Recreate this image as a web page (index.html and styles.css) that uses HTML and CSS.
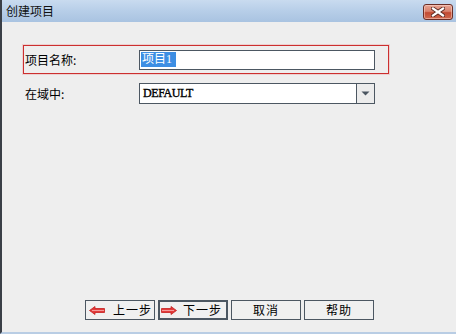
FILE: index.html
```html
<!DOCTYPE html>
<html lang="zh-CN">
<head>
<meta charset="utf-8">
<title>创建项目</title>
<link rel="stylesheet" href="styles.css">
</head>
<body>
<div class="window">
  <div class="titlebar">
    <span class="title">创建项目</span>
    <span class="close" aria-label="关闭">
      <svg width="14" height="10" viewBox="0 0 14 10">
        <path d="M2 1.5 L12 8.5 M12 1.5 L2 8.5" stroke="#5a2a22" stroke-width="4" stroke-linecap="square"/>
        <path d="M2 1.5 L12 8.5 M12 1.5 L2 8.5" stroke="#ffffff" stroke-width="2.2" stroke-linecap="square"/>
      </svg>
    </span>
  </div>
  <div class="content">
    <div class="form">
      <div class="row row-active">
        <span class="label">项目名称:</span>
        <div class="field"><span class="selected">项目1</span></div>
      </div>
      <div class="row">
        <span class="label">在域中:</span>
        <div class="combo">
          <span class="combo-value">DEFAULT</span>
          <span class="combo-drop">
            <svg width="9" height="5" viewBox="0 0 9 5"><polygon points="0.5,0.5 8.5,0.5 4.5,4.5" fill="#4a5560"/></svg>
          </span>
        </div>
      </div>
    </div>
    <div class="buttons">
      <span class="btn btn-icon">
        <svg width="16" height="9" viewBox="0 0 16 9">
          <polygon points="0.5,4.5 6,0.5 6,2.5 15.5,2.5 15.5,6.5 6,6.5 6,8.5" fill="#e23b3b" stroke="#c42020" stroke-width="0.8"/>
          <line x1="3" y1="4.5" x2="15" y2="4.5" stroke="#f59a9a" stroke-width="1"/>
        </svg>
        <span>上一步</span>
      </span>
      <span class="btn btn-icon btn-default">
        <svg width="16" height="9" viewBox="0 0 16 9">
          <polygon points="15.5,4.5 10,0.5 10,2.5 0.5,2.5 0.5,6.5 10,6.5 10,8.5" fill="#e23b3b" stroke="#c42020" stroke-width="0.8"/>
          <line x1="1" y1="4.5" x2="13" y2="4.5" stroke="#f59a9a" stroke-width="1"/>
        </svg>
        <span>下一步</span>
      </span>
      <span class="btn">取消</span>
      <span class="btn">帮助</span>
    </div>
  </div>
</div>
</body>
</html>
```

FILE: styles.css
```css
html, body {
  margin: 0;
  padding: 0;
  background: #eeeeee;
}

.window {
  width: 456px;
  height: 334px;
  box-sizing: border-box;
  display: flex;
  flex-direction: column;
  background: #eeeeee;
  border-left: 2px solid #3a3f47;
  border-bottom: 2px solid #b9cde4;
  font-family: "Noto Sans CJK SC", "Liberation Sans", sans-serif;
  font-size: 12px;
  color: #000;
}

.titlebar {
  height: 22px;
  flex: none;
  display: flex;
  align-items: center;
  justify-content: space-between;
  padding: 0 3px 0 4px;
  background: linear-gradient(to bottom, #c9dbef 0%, #b7cee8 50%, #a9c3e1 100%);
}

.title {
  font-size: 12px;
  line-height: 16px;
  color: #111111;
}

.close {
  width: 30px;
  height: 16px;
  box-sizing: border-box;
  margin-top: 1px;
  border: 1px solid #6b2e26;
  border-radius: 3px;
  display: flex;
  align-items: center;
  justify-content: center;
  background: linear-gradient(to bottom, #e8a593 0%, #d9826e 45%, #c24a32 55%, #cf6a50 100%);
  box-shadow: inset 0 0 0 1px rgba(255, 220, 210, 0.5);
}

.close svg {
  display: block;
}

.content {
  flex: 1;
  display: flex;
  flex-direction: column;
  padding: 23px 0 12px 21px;
}

.form {
  display: flex;
  flex-direction: column;
  gap: 5px;
}

.row {
  width: 366px;
  height: 29px;
  box-sizing: border-box;
  border: 1px solid transparent;
  display: flex;
  align-items: center;
  padding-left: 1px;
}

.row-active {
  border-color: #cc2f2f;
  box-shadow: 0 0 0 1px rgba(236, 170, 170, 0.45);
}

.label {
  width: 114px;
  flex: none;
  line-height: 16px;
}

.field {
  width: 236px;
  height: 20px;
  box-sizing: border-box;
  border: 1px solid #4c5762;
  background: #ffffff;
  display: flex;
  align-items: center;
  padding-left: 1px;
}

.selected {
  background: #3d8ee3;
  color: #ffffff;
  font-family: "Liberation Serif", "Noto Sans CJK SC", serif;
  font-size: 12px;
  line-height: 15px;
  padding: 0 4px 0 1px;
}

.combo {
  width: 236px;
  height: 21px;
  box-sizing: border-box;
  border: 1px solid #4c5762;
  background: #ffffff;
  display: flex;
  align-items: stretch;
}

.combo-value {
  flex: 1;
  display: flex;
  align-items: center;
  padding-left: 3px;
  font-family: "Liberation Serif", serif;
  font-size: 12px;
  letter-spacing: -0.4px;
  color: #000000;
  -webkit-text-stroke: 0.35px #000000;
}

.combo-drop {
  width: 17px;
  flex: none;
  border-left: 1px solid #4c5762;
  background: #ececec;
  display: flex;
  align-items: center;
  justify-content: center;
}

.combo-drop svg {
  display: block;
}

.buttons {
  margin-top: auto;
  display: flex;
  gap: 3px;
  padding-left: 62px;
}

.btn {
  width: 70px;
  height: 20px;
  box-sizing: border-box;
  border: 1px solid #4c5762;
  background: #f0f0f0;
  display: flex;
  align-items: center;
  justify-content: center;
  font-size: 12px;
  line-height: 16px;
  letter-spacing: 1px;
}

.btn-icon {
  justify-content: flex-start;
  padding-left: 3px;
  gap: 8px;
}

.btn-icon svg {
  display: block;
  flex: none;
}

.btn-default {
  border: 2px solid #4c5762;
  padding-left: 1px;
  gap: 6px;
}
```
